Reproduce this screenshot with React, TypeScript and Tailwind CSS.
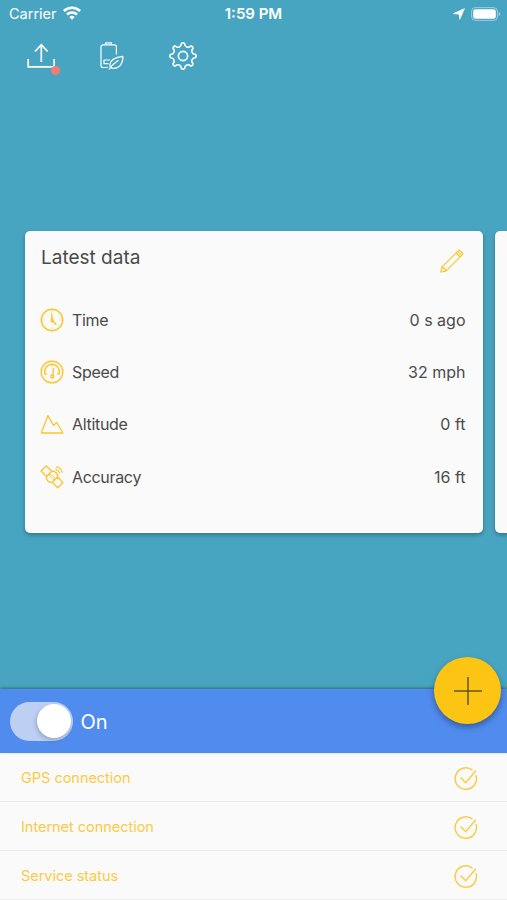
import type { ReactNode } from "react";

interface IconProps {
  className?: string;
}

function UploadIcon({ className }: IconProps) {
  return (
    <svg className={className} viewBox="0 0 28 26" fill="none" stroke="currentColor" strokeWidth="1.7">
      <path d="M1.200 16v7.800h26V16" />
      <path d="M14.300 19V2M8 8.500l6.300-6.800 6.300 6.800" />
    </svg>
  );
}

function BatteryLeafIcon({ className }: IconProps) {
  return (
    <svg className={className} viewBox="0 0 24 28" fill="none" stroke="currentColor" strokeWidth="1.2" strokeLinejoin="round">
      <path d="M5.500 2.800V.900h6v1.900" />
      <path d="M16.400 12.500V4.800a2 2 0 0 0-2-2H3a2 2 0 0 0-2 2V23.500a2 2 0 0 0 2 2h5" />
      <path d="M10 18H4v3.700h4.500" />
      <path d="M22.800 14.300c.4 6.500-2.800 12.500-10 12-2.400-.2-3.200-1.600-2.800-3.900.7-4.800 5.800-7.400 12.800-8.100Z" />
      <path d="M9 27.500c2.300-3.500 5-6.500 9.500-9.200" />
    </svg>
  );
}

function polar(radius: number, degrees: number) {
  const a = (degrees * Math.PI) / 180;
  return `${(14 + radius * Math.cos(a)).toFixed(2)} ${(14 + radius * Math.sin(a)).toFixed(2)}`;
}

// Eight rounded teeth joined by round valleys
const gearPath =
  `M${polar(12.4, -8)}` +
  Array.from(
    { length: 8 },
    (_, i) => `Q${polar(14.3, i * 45)} ${polar(12.4, i * 45 + 8)}A3.300 3.300 0 0 0 ${polar(12.4, i * 45 + 37)}`,
  ).join("") +
  "Z";

function GearIcon({ className }: IconProps) {
  return (
    <svg className={className} viewBox="0 0 28 28" fill="none" stroke="currentColor" strokeWidth="1.6" strokeLinejoin="round">
      <path d={gearPath} />
      <circle cx="14" cy="14" r="4.600" />
    </svg>
  );
}

function WifiIcon({ className }: IconProps) {
  return (
    <svg className={className} viewBox="0 0 18 14" fill="none" stroke="currentColor" strokeWidth="2.600">
      <path d="M.9 5a11.800 11.800 0 0 1 16.200 0M4 8.500a7.300 7.300 0 0 1 10 0" />
      <path d="M9 13.700 6.300 11a3.900 3.900 0 0 1 5.400 0Z" fill="currentColor" stroke="none" />
    </svg>
  );
}

function LocationIcon({ className }: IconProps) {
  return (
    <svg className={className} viewBox="0 0 12 12" fill="currentColor" stroke="currentColor" strokeWidth=".8" strokeLinejoin="round">
      <path d="M11.400.700 6.700 11.300 6.200 6.100.6 5.600Z" />
    </svg>
  );
}

function BatteryIcon({ className }: IconProps) {
  return (
    <svg className={className} viewBox="0 0 30 14" fill="none">
      <rect x=".6" y=".6" width="25.800" height="12.800" rx="3.800" stroke="white" strokeOpacity=".45" />
      <rect x="2.200" y="2.200" width="22.600" height="9.600" rx="2.400" fill="white" />
      <path d="M27.800 4.800c2 .8 2 3.600 0 4.400Z" fill="white" fillOpacity=".5" />
    </svg>
  );
}

function PencilIcon({ className }: IconProps) {
  return (
    <svg className={className} viewBox="0 0 24 24" fill="none" stroke="currentColor" strokeWidth="1.200" strokeLinejoin="round">
      <path d="M1 23l.8-4.800L18.400 1.600q.8-.8 1.600 0l2.400 2.400q.8.800 0 1.600L5.800 22.200Z" />
      <path d="M1.800 18.200q3.200.8 4 4M16 4l4 4M17.600 2.400l4 4" />
    </svg>
  );
}

function ClockIcon() {
  return (
    <svg className="size-6" viewBox="0 0 24 24" fill="none" stroke="currentColor" strokeWidth="1.500">
      <circle cx="12" cy="12" r="10.700" />
      <path d="M12 2.500v2M12 19.500v2M2.500 12h2M19.500 12h2" strokeWidth=".7" />
      <path d="m12.500 12.500 3.700 4.300" />
      <path d="m11.600 5 1.700 7.500a1.300 1.300 0 1 1-2.400 0Z" fill="currentColor" strokeWidth=".5" />
    </svg>
  );
}

function SpeedIcon() {
  return (
    <svg className="size-6" viewBox="0 0 24 24" fill="none" stroke="currentColor" strokeWidth="1.400">
      <circle cx="12" cy="12" r="10.800" />
      <path d="M5.300 14.500a7.300 7.300 0 1 1 13.400 0" />
      <path d="m5 14.500 2-.8M19 14.500l-2-.8M12 4.700v2" strokeWidth="1" />
      <path d="m13.300 8-.4 7" />
      <circle cx="12.200" cy="16.500" r="1.500" />
    </svg>
  );
}

function AltitudeIcon() {
  return (
    <svg className="size-6" viewBox="0 0 24 24" fill="none" stroke="currentColor" strokeWidth="1.300" strokeLinejoin="round">
      <path d="M1.300 21 7.800 3.700l5.800 9.700 3.100-2.900L23 21Z" />
    </svg>
  );
}

function SatelliteIcon() {
  return (
    <svg className="size-6" viewBox="0 0 24 24" fill="none" stroke="currentColor" strokeWidth="1.400" strokeLinejoin="round">
      <path d="M1 6 6.300 1l5.400 5.300-5.200 5.200ZM12.300 17.300l5.200-5.200 5.400 5.400-5.200 5.200Z" />
      <path d="M6.500 11.500c-.6 3.600 2.300 6.400 5.800 5.800M11.700 6.300c3.600-.5 6.400 2.300 5.800 5.800" />
      <path d="M9.100 8.900c2-.2 5.900 3.700 5.800 5.800-2 .3-6-3.700-5.800-5.800Z" strokeWidth=".9" />
      <path d="M15.300 4.300c1.900.2 3.900 2.200 4.200 4.200M16 1.800c3.300.1 6 2.800 6.200 6" strokeWidth="1.300" />
    </svg>
  );
}

function CheckIcon({ className }: IconProps) {
  return (
    <svg className={className} viewBox="0 0 24 24" fill="none" stroke="currentColor" strokeWidth="1.500">
      <path d="M18.500 3.200A10.700 10.700 0 1 0 22 8.300" />
      <path d="m6.500 10.500 5.200 5.200L21.800 3.800" />
    </svg>
  );
}

interface Reading {
  label: string;
  value: string;
  icon: ReactNode;
}

const readings: Reading[] = [
  { label: "Time", value: "0 s ago", icon: <ClockIcon /> },
  { label: "Speed", value: "32 mph", icon: <SpeedIcon /> },
  { label: "Altitude", value: "0 ft", icon: <AltitudeIcon /> },
  { label: "Accuracy", value: "16 ft", icon: <SatelliteIcon /> },
];

const statuses = ["GPS connection", "Internet connection", "Service status"];

function StatusBar() {
  return (
    <div className="grid h-7 grid-cols-3 items-center pl-[9px] pr-1.5 text-white">
      <div className="flex items-center gap-1.5">
        <span className="text-[14.500px] leading-none">Carrier</span>
        <WifiIcon className="-mt-0.5 h-3.5 w-[18px]" />
      </div>
      <span className="-ml-[3px] pb-px text-center text-[15px] leading-none font-semibold whitespace-nowrap">1:59 PM</span>
      <div className="flex items-center justify-end gap-1.5 pb-px">
        <LocationIcon className="size-3" />
        <BatteryIcon className="h-3.5 w-[30px]" />
      </div>
    </div>
  );
}

function Toolbar() {
  return (
    <div className="flex h-14 items-center pl-[27px] text-white">
      <div className="relative mr-[45px]">
        <UploadIcon className="h-[26px] w-7" />
        <span className="absolute -right-[5px] -bottom-[6px] size-[9px] rounded-full bg-[#f47c72]" />
      </div>
      <BatteryLeafIcon className="mr-[45px] h-7 w-6" />
      <GearIcon className="size-7" />
    </div>
  );
}

function LatestDataCard() {
  return (
    <section className="h-[302px] w-[457.500px] shrink-0 rounded-[5px] bg-[#fafafa] px-4 shadow-[0_2px_4px_rgba(0,0,0,0.3)]">
      <div className="flex h-[63.500px] items-start justify-between pt-[15px]">
        <h2 className="text-[19px] leading-6 text-[#4a4a4a]">Latest data</h2>
        <PencilIcon className="mt-[3px] mr-[3px] size-6 text-[#fbc62f]" />
      </div>
      <ul>
        {readings.map((reading) => (
          <li key={reading.label} className="flex h-[52.200px] items-center text-base text-[#4a4a4a]">
            <span className="mr-2 -ml-px text-[#fbc62f]">{reading.icon}</span>
            <span className="tracking-[-0.02em]">{reading.label}</span>
            <span className="ml-auto pr-px">{reading.value}</span>
          </li>
        ))}
      </ul>
    </section>
  );
}

export default function App() {
  return (
    <main className="flex h-[900px] w-full flex-col overflow-hidden bg-[#48a5c2] font-[Inter,sans-serif]">
      <StatusBar />
      <Toolbar />

      <div className="mt-[146.500px] flex gap-[12.500px] pl-[25px]">
        <LatestDataCard />
        <section className="h-[302px] w-[457.500px] shrink-0 rounded-[5px] bg-[#fafafa] shadow-[0_2px_4px_rgba(0,0,0,0.3)]" />
      </div>

      <div className="relative mt-auto flex h-16 shrink-0 items-center bg-[#508bee] pl-2.5 shadow-[0_-1px_3px_rgba(0,0,0,0.35)]">
        <button type="button" role="switch" aria-checked="true" className="flex h-[39px] w-[63px] items-center justify-end rounded-full bg-[#bdcff2] pr-[2px]">
          <span className="size-[34px] rounded-full bg-white shadow-[-1px_2px_4px_rgba(0,0,0,0.2)]" />
        </button>
        <span className="ml-[7.500px] pt-px text-[20px] text-white">On</span>
        <button
          type="button"
          aria-label="Add"
          className="absolute -top-8 right-1.5 flex size-[67px] items-center justify-center rounded-full bg-[#fdc513] shadow-[0_3px_6px_rgba(0,0,0,0.35)]"
        >
          <svg className="size-[30px]" viewBox="0 0 30 30" stroke="#66541a" strokeWidth="1.500">
            <path d="M15 1v28M1 15h28" />
          </svg>
        </button>
      </div>

      <ul className="h-[147px] shrink-0 bg-[#fafafa]">
        {statuses.map((status) => (
          <li key={status} className="flex h-[49px] items-center justify-between border-b border-[#ececec] pt-0.5 pr-[29px] pl-[21px] text-[#fbcb45]">
            <span className="pt-px text-[14.600px] tracking-[-0.005em]">{status}</span>
            <CheckIcon className="mt-0.5 size-6" />
          </li>
        ))}
      </ul>
    </main>
  );
}
